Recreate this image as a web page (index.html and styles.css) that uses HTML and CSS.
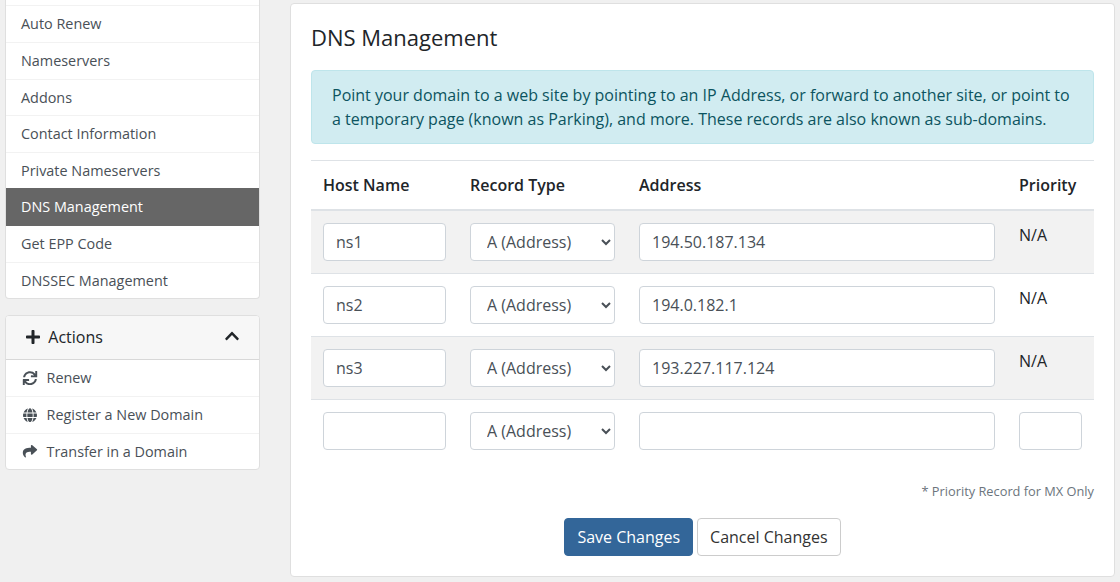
FILE: index.html
```html
<!DOCTYPE html>
<html lang="en">
<head>
<meta charset="utf-8">
<title>DNS Management</title>
<link rel="stylesheet" href="styles.css">
</head>
<body>
<div class="layout">
  <aside class="sidebar">
    <nav class="card menu">
      <span class="item item-cut"></span>
      <a class="item">Auto Renew</a>
      <a class="item">Nameservers</a>
      <a class="item">Addons</a>
      <a class="item">Contact Information</a>
      <a class="item">Private Nameservers</a>
      <a class="item active">DNS Management</a>
      <a class="item">Get EPP Code</a>
      <a class="item">DNSSEC Management</a>
    </nav>
    <nav class="card">
      <div class="card-header">
        <svg class="icon plus" viewBox="0 0 448 512"><path d="M416 208H272V64c0-17.67-14.33-32-32-32h-32c-17.67 0-32 14.33-32 32v144H32c-17.67 0-32 14.33-32 32v32c0 17.67 14.33 32 32 32h144v144c0 17.67 14.33 32 32 32h32c17.67 0 32-14.33 32-32V304h144c17.67 0 32-14.33 32-32v-32c0-17.67-14.33-32-32-32z"/></svg>
        <span class="header-title">Actions</span>
        <svg class="icon chevron" viewBox="0 0 448 512"><path d="M240.971 130.524l194.343 194.343c9.373 9.373 9.373 24.569 0 33.941l-22.667 22.667c-9.357 9.357-24.522 9.375-33.901.04L224 227.495 69.255 381.516c-9.379 9.335-24.544 9.317-33.901-.04l-22.667-22.667c-9.373-9.373-9.373-24.569 0-33.941L207.03 130.525c9.372-9.373 24.568-9.373 33.941-.001z"/></svg>
      </div>
      <a class="item with-icon"><svg class="icon" viewBox="0 0 512 512"><path d="M440.65 12.57l4 82.77A247.16 247.16 0 0 0 255.83 8C134.73 8 33.91 94.92 12.29 209.82A12 12 0 0 0 24.09 224h49.05a12 12 0 0 0 11.67-9.26 175.91 175.91 0 0 1 317-56.94l-101.46-4.86a12 12 0 0 0-12.57 12v47.41a12 12 0 0 0 12 12H500a12 12 0 0 0 12-12V12a12 12 0 0 0-12-12h-47.37a12 12 0 0 0-11.98 12.57zM255.83 432a175.61 175.61 0 0 1-146-77.8l101.8 4.87a12 12 0 0 0 12.57-12v-47.4a12 12 0 0 0-12-12H12a12 12 0 0 0-12 12V500a12 12 0 0 0 12 12h47.35a12 12 0 0 0 12-12.6l-4.15-82.57A247.17 247.17 0 0 0 255.83 504c121.11 0 221.93-86.92 243.55-201.82a12 12 0 0 0-11.8-14.18h-49.05a12 12 0 0 0-11.67 9.26A175.86 175.86 0 0 1 255.83 432z"/></svg>Renew</a>
      <a class="item with-icon"><svg class="icon" viewBox="0 0 496 512"><path d="M336.5 160C322 70.7 287.8 8 248 8s-74 62.7-88.5 152h177zM152 256c0 22.2 1.2 43.5 3.3 64h185.3c2.1-20.5 3.3-41.8 3.3-64s-1.2-43.5-3.3-64H155.3c-2.1 20.5-3.3 41.8-3.3 64zm324.7-96c-28.6-67.9-86.5-120.4-158-141.6 24.4 33.8 41.2 84.7 50 141.6h108zM177.2 18.4C105.8 39.6 47.8 92.1 19.3 160h108c8.7-56.9 25.5-107.8 49.9-141.6zM487.4 192H372.7c2.1 21 3.3 42.5 3.3 64s-1.2 43-3.3 64h114.6c5.5-20.5 8.6-41.8 8.6-64s-3.1-43.5-8.5-64zM120 256c0-21.5 1.2-43 3.3-64H8.6C3.2 212.5 0 233.8 0 256s3.2 43.5 8.6 64h114.6c-2-21-3.2-42.5-3.2-64zm39.5 96c14.5 89.3 48.7 152 88.5 152s74-62.7 88.5-152h-177zm159.3 141.6c71.4-21.2 129.4-73.7 158-141.6h-108c-8.8 56.9-25.6 107.8-50 141.6zM19.3 352c28.6 67.9 86.5 120.4 158 141.6-24.4-33.8-41.2-84.7-50-141.6h-108z"/></svg>Register a New Domain</a>
      <a class="item with-icon"><svg class="icon" viewBox="0 0 512 512"><path d="M503.691 189.836L327.687 37.851C312.281 24.546 288 35.347 288 56.015v80.053C127.371 137.907 0 170.1 0 322.326c0 61.441 39.581 122.309 83.333 154.132 13.653 9.931 33.111-2.533 28.077-18.631C66.066 312.814 132.917 274.316 288 272.085V360c0 20.7 24.3 31.453 39.687 18.164l176.004-152c11.071-9.562 11.086-26.753 0-36.328z"/></svg>Transfer in a Domain</a>
    </nav>
  </aside>
  <main class="card content">
    <h3 class="title">DNS Management</h3>
    <div class="alert">Point your domain to a web site by pointing to an IP Address, or forward to another site, or point to a temporary page (known as Parking), and more. These records are also known as sub-domains.</div>
    <table class="records">
      <colgroup><col class="col-host"><col class="col-type"><col class="col-address"><col class="col-priority"></colgroup>
      <thead>
        <tr><th>Host Name</th><th>Record Type</th><th>Address</th><th>Priority</th></tr>
      </thead>
      <tbody>
        <tr>
          <td><input class="control" type="text" value="ns1"></td>
          <td><select class="control"><option>A (Address)</option></select></td>
          <td><input class="control" type="text" value="194.50.187.134"></td>
          <td>N/A</td>
        </tr>
        <tr>
          <td><input class="control" type="text" value="ns2"></td>
          <td><select class="control"><option>A (Address)</option></select></td>
          <td><input class="control" type="text" value="194.0.182.1"></td>
          <td>N/A</td>
        </tr>
        <tr>
          <td><input class="control" type="text" value="ns3"></td>
          <td><select class="control"><option>A (Address)</option></select></td>
          <td><input class="control" type="text" value="193.227.117.124"></td>
          <td>N/A</td>
        </tr>
        <tr>
          <td><input class="control" type="text"></td>
          <td><select class="control"><option>A (Address)</option></select></td>
          <td><input class="control" type="text"></td>
          <td><input class="control" type="text"></td>
        </tr>
      </tbody>
    </table>
    <p class="note">* Priority Record for MX Only</p>
    <div class="buttons">
      <button class="btn btn-primary">Save Changes</button>
      <button class="btn btn-default">Cancel Changes</button>
    </div>
  </main>
</div>
</body>
</html>
```
FILE: styles.css
```css
*, *::before, *::after { box-sizing: border-box; }

body {
  margin: 0;
  height: 582px;
  overflow: hidden;
  background: #f0f0f0;
  color: #212529;
  font: 400 16px/1.5 "Open Sans", sans-serif;
}

.layout {
  display: grid;
  grid-template-columns: 255px 825px;
  column-gap: 30px;
  align-items: start;
  padding-left: 5px;
}

.sidebar { display: flex; flex-direction: column; gap: 16px; }

.card {
  background: #fff;
  border: 1px solid #dfdfdf;
  border-radius: 4px;
}

.menu {
  border-top: 0;
  border-top-left-radius: 0;
  border-top-right-radius: 0;
}

.item {
  display: block;
  padding: 7px 15px;
  border-bottom: 1px solid #f2f2f2;
  color: #495057;
  font-size: 14.4px;
  line-height: 21.6px;
}
.item:last-child { border-bottom: 0; }
.item-cut { height: 6.4px; padding: 0; }
.item.active {
  margin-top: -1px;
  border-top: 1px solid #666;
  border-bottom-color: #666;
  background: #666;
  color: #fff;
}

.with-icon { display: flex; align-items: center; gap: 7.5px; }

.icon { width: 18px; height: 14.4px; fill: currentColor; flex: none; }

.card-header {
  display: flex;
  align-items: center;
  padding: 8.8px 20px 10.4px 17px;
  border-bottom: 1px solid #d8d8d8;
  border-radius: 3px 3px 0 0;
  background: #f7f7f7;
}
.header-title { flex: 1; margin-left: 5.3px; }
.plus { width: 20px; height: 16px; }
.chevron { width: 14px; height: 16px; margin-bottom: 1px; }

.content { margin-top: 3px; padding: 20px; }

.title {
  margin: 0 0 20px;
  font-size: 22px;
  font-weight: 400;
  line-height: 26px;
}

.alert {
  margin-bottom: 16px;
  padding: 12px 20px;
  border: 1px solid #bee5eb;
  border-radius: 4px;
  background: #d1ecf1;
  color: #0c5460;
}

.records {
  width: 783px;
  table-layout: fixed;
  border-collapse: collapse;
}
.col-host { width: 147px; }
.col-type { width: 169px; }
.col-address { width: 380px; }
.col-priority { width: 87px; }
.records th, .records td {
  padding: 12px;
  border-top: 1px solid #dee2e6;
  text-align: left;
  vertical-align: top;
}
.records th { border-bottom: 2px solid #dee2e6; font-weight: 600; }
.records tbody tr:nth-child(odd) { background: #f2f2f2; }

.control {
  display: block;
  width: 100%;
  height: 38px;
  margin: 0;
  padding: 6px 12px;
  border: 1px solid #ced4da;
  border-radius: 4px;
  background: #fff;
  color: #495057;
  font: inherit;
}

.note {
  margin: 20px 0 17px;
  color: #6c757d;
  font-size: 12.8px;
  line-height: 19px;
  text-align: right;
}

.buttons { display: flex; justify-content: center; gap: 4px; }
.btn {
  height: 38px;
  padding: 6px 12px;
  border: 1px solid #ccc;
  border-radius: 4px;
  font: inherit;
}
.btn-primary { background: #336699; border-color: #336699; color: #fff; }
.btn-default { background: #fff; color: #333; }
```
